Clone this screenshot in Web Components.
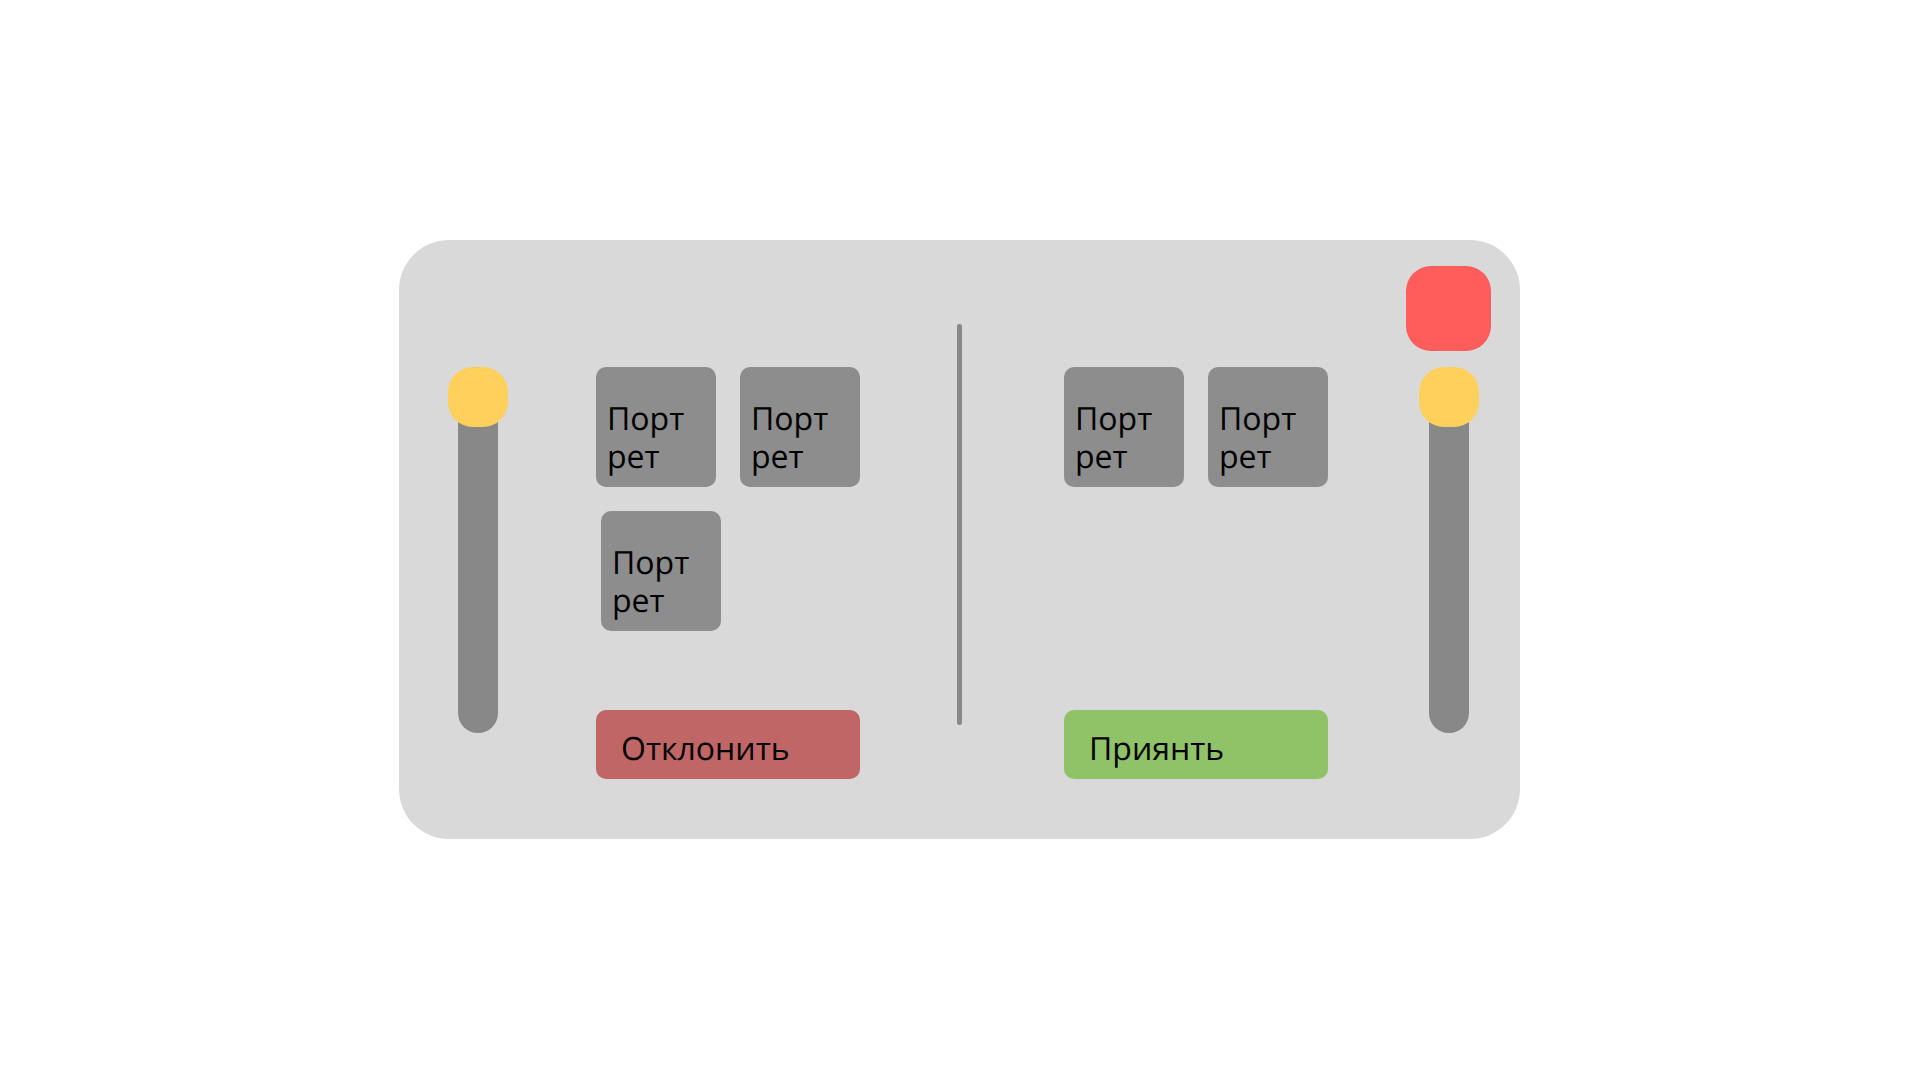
<!DOCTYPE html>
<html lang="ru">
<head>
<meta charset="utf-8">
<meta name="viewport" content="width=device-width, initial-scale=1">
<title>Портреты</title>
<style>
  body {
    margin: 0;
    background: #fff;
    color: #000;
    font: 32px/38px "Open Sans", "Noto Sans", sans-serif;
    text-rendering: geometricPrecision;
  }
</style>
</head>
<body>
<choice-page></choice-page>
<script>
  function define(name, html) {
    const template = document.createElement('template');
    template.innerHTML = html;
    customElements.define(name, class extends HTMLElement {
      constructor() {
        super();
        this.attachShadow({ mode: 'open' }).append(template.content.cloneNode(true));
      }
      connectedCallback() {
        const control = this.shadowRoot.querySelector('input, button');
        if (control && this.hasAttribute('label')) {
          control.setAttribute('aria-label', this.getAttribute('label'));
        }
      }
    });
  }

  define('portrait-card', `
    <style>
      :host {
        box-sizing: border-box;
        display: flex;
        align-items: flex-end;
        width: 120px;
        height: 120px;
        padding: 12px 16px 11px 11px;
        border-radius: 10px;
        background: #8d8d8d;
      }
      span { min-width: 0; overflow-wrap: anywhere; }
    </style>
    <span><slot></slot></span>`);

  define('action-button', `
    <style>
      :host { display: block; }
      button {
        display: block;
        width: 100%;
        margin: 0;
        padding: 20px 25px 11px;
        border: 0;
        border-radius: 10px;
        background: var(--fill);
        color: inherit;
        font: inherit;
        text-rendering: inherit;
        text-align: left;
        cursor: pointer;
      }
    </style>
    <button type="button"><slot></slot></button>`);

  define('close-button', `
    <style>
      :host { display: block; }
      button {
        display: block;
        width: 85px;
        height: 85px;
        padding: 0;
        border: 0;
        border-radius: 25px;
        background: #ff5c5c;
        cursor: pointer;
      }
    </style>
    <button type="button"></button>`);

  define('scroll-slider', `
    <style>
      :host {
        display: grid;
        grid-template: 366px / 60px;
      }
      :host::before {
        content: "";
        grid-area: 1 / 1;
        justify-self: center;
        width: 40px;
        border-radius: 20px;
        background: #888;
      }
      input {
        grid-area: 1 / 1;
        appearance: none;
        writing-mode: vertical-lr;
        width: 60px;
        height: 100%;
        margin: 0;
        background: transparent;
        z-index: 1;
      }
      input::-webkit-slider-runnable-track {
        width: 60px;
        background: transparent;
      }
      input::-webkit-slider-thumb {
        appearance: none;
        width: 60px;
        height: 60px;
        border: 0;
        border-radius: 25px;
        background: #ffd15c;
      }
    </style>
    <input type="range" min="0" max="100" value="0">`);

  define('choice-pane', `
    <style>
      :host {
        display: flex;
        flex-direction: column;
        justify-content: space-between;
      }
      div {
        display: flex;
        flex-wrap: wrap;
        gap: 24px;
      }
    </style>
    <div><slot></slot></div>
    <slot name="action"></slot>`);

  define('choice-page', `
    <style>
      :host {
        box-sizing: border-box;
        display: grid;
        justify-content: center;
        align-content: center;
        min-height: 100vh;
        padding: 0 1px 1px 0;
      }
      main {
        display: grid;
        grid-template-columns: 60px 449px 5px 444px 85px;
        grid-template-rows: 85px 412px;
        row-gap: 16px;
        padding: 26px 29px 60px 49px;
        border-radius: 50px;
        background: #d9d9d9;
      }
      close-button { grid-area: 1 / 5; }
      scroll-slider { align-self: start; }
      .left { grid-area: 2 / 1; }
      .right { grid-area: 2 / 5; justify-self: end; margin-right: 12px; }
      .reject { grid-area: 2 / 2; padding: 0 97px 0 88px; }
      .accept { grid-area: 2 / 4; padding: 0 78px 0 102px; }
      .reject action-button { --fill: #c16666; }
      .accept action-button { --fill: #90c368; }
      .indented { margin-left: 5px; }
      .divider {
        grid-area: 1 / 3 / 3;
        margin: 58px 0 54px;
        border-radius: 3px;
        background: #888;
      }
    </style>
    <main>
      <close-button label="Закрыть"></close-button>
      <scroll-slider class="left" label="Прокрутка слева"></scroll-slider>
      <choice-pane class="reject">
        <portrait-card>Портрет</portrait-card>
        <portrait-card>Портрет</portrait-card>
        <portrait-card class="indented">Портрет</portrait-card>
        <action-button slot="action">Отклонить</action-button>
      </choice-pane>
      <div class="divider"></div>
      <choice-pane class="accept">
        <portrait-card>Портрет</portrait-card>
        <portrait-card>Портрет</portrait-card>
        <action-button slot="action">Приянть</action-button>
      </choice-pane>
      <scroll-slider class="right" label="Прокрутка справа"></scroll-slider>
    </main>`);
</script>
</body>
</html>
